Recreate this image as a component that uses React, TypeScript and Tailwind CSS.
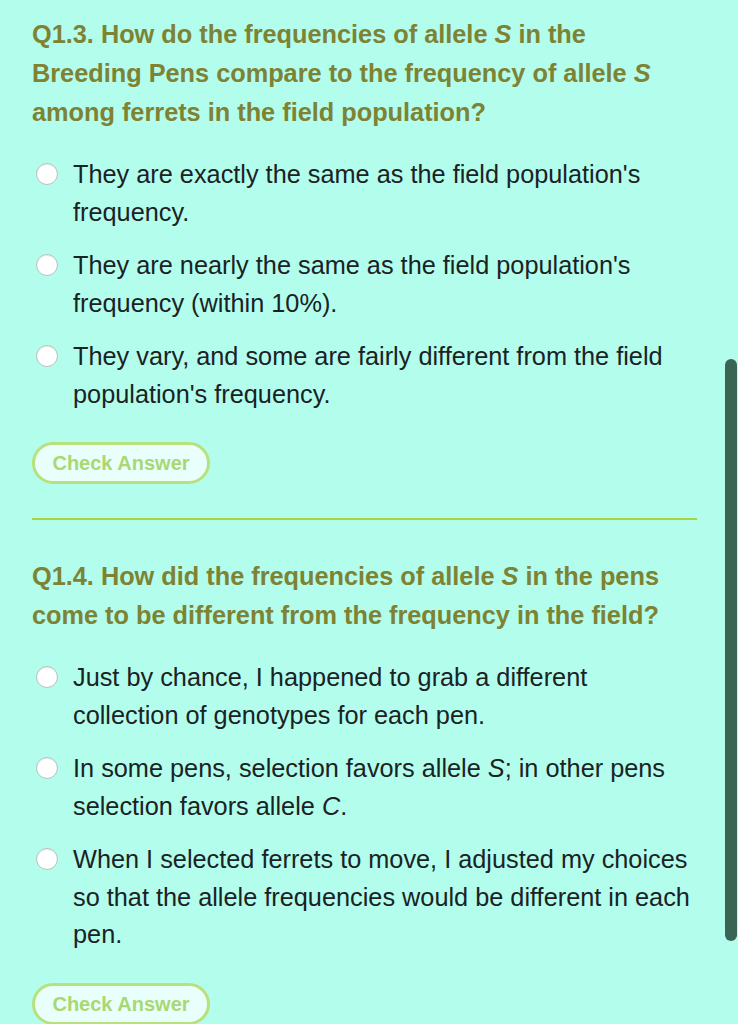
import { ReactNode } from "react";

type Question = {
  title: ReactNode;
  options: ReactNode[];
};

const questions: Question[] = [
  {
    title: (
      <>
        Q1.3. How do the frequencies of allele <i>S</i> in the
        <br />
        Breeding Pens compare to the frequency of allele <i>S</i>
        <br />
        among ferrets in the field population?
      </>
    ),
    options: [
      <>
        They are exactly the same as the field population's
        <br />
        frequency.
      </>,
      <>
        They are nearly the same as the field population's
        <br />
        frequency (within 10%).
      </>,
      <>
        They vary, and some are fairly different from the field
        <br />
        population's frequency.
      </>,
    ],
  },
  {
    title: (
      <>
        Q1.4. How did the frequencies of allele <i>S</i> in the pens
        <br />
        come to be different from the frequency in the field?
      </>
    ),
    options: [
      <>
        Just by chance, I happened to grab a different
        <br />
        collection of genotypes for each pen.
      </>,
      <>
        In some pens, selection favors allele <i>S</i>; in other pens
        <br />
        selection favors allele <i>C</i>.
      </>,
      <>
        When I selected ferrets to move, I adjusted my choices
        <br />
        so that the allele frequencies would be different in each
        <br />
        pen.
      </>,
    ],
  },
];

function QuestionBlock({ q }: { q: Question }) {
  return (
    <div className="flex flex-col">
      <h2 className="text-[25.3px] leading-[39px] font-bold text-[#7e8233] whitespace-nowrap">
        {q.title}
      </h2>
      <div className="mt-[24px] flex flex-col gap-[16px]">
        {q.options.map((opt, i) => (
          <label key={i} className="flex items-start gap-[15px]">
            <span className="mt-[7px] ml-[4px] size-[22px] shrink-0 rounded-full border border-[#b5c2be] bg-white shadow-[inset_0_1px_1px_rgba(0,0,0,0.08)]" />
            <span className="text-[25.3px] leading-[37.5px] text-[#1a2224] whitespace-nowrap">
              {opt}
            </span>
          </label>
        ))}
      </div>
      <button className="mt-[29px] w-[178px] h-[42px] rounded-full border-[3px] border-[#b8e17c] bg-[#e9fffb] text-[20px] font-bold text-[#a9d871] flex items-center justify-center">
        Check Answer
      </button>
    </div>
  );
}

export default function App() {
  return (
    <div
      className="relative min-h-[1024px] bg-[#b3fdec] overflow-hidden"
      style={{ fontFamily: '"Liberation Sans", Arial, sans-serif' }}
    >
      <div className="pl-[32px] pr-[41px] pt-[15px]">
        <QuestionBlock q={questions[0]} />
        <hr className="mt-[34px] mb-[37px] border-0 h-[2px] bg-[#a5d540]" />
        <QuestionBlock q={questions[1]} />
      </div>
      {/* overlay scroll thumb */}
      <div className="absolute right-[1px] top-[359px] w-[12px] h-[582px] rounded-full bg-[#3a6554]" />
    </div>
  );
}
